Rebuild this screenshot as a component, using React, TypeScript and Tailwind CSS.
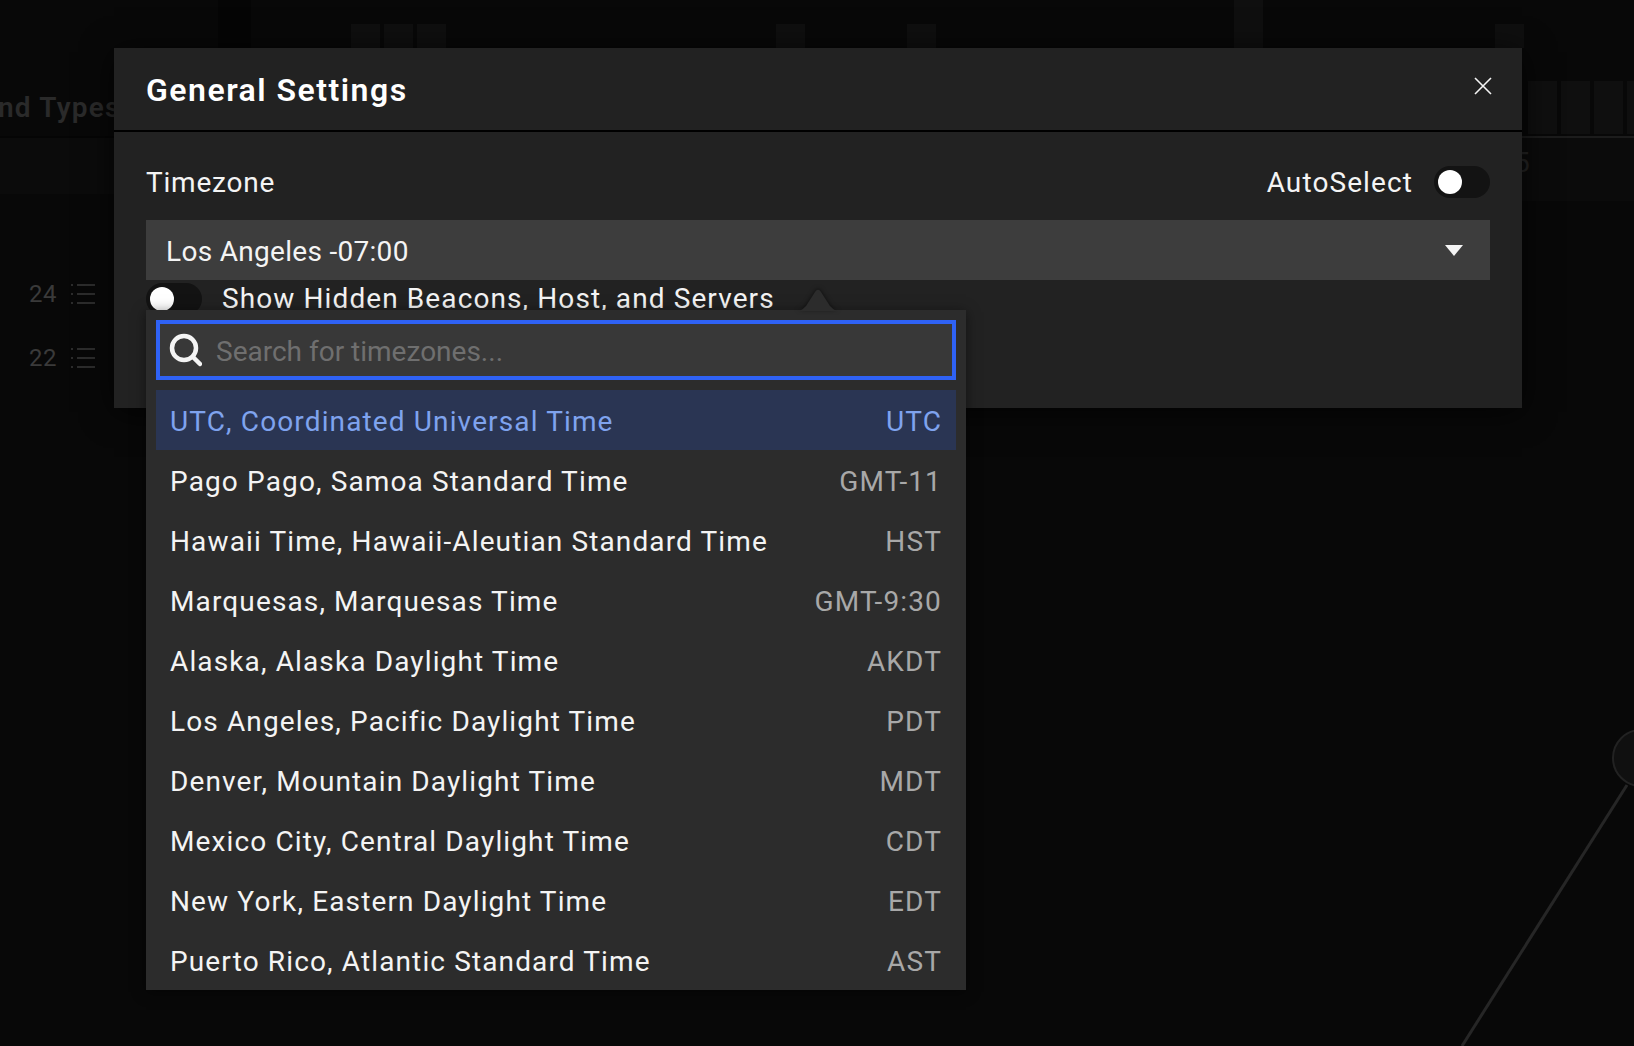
import React from 'react';

// Timezone list shown in the open dropdown
const timezones = [
  { name: 'UTC, Coordinated Universal Time', code: 'UTC' },
  { name: 'Pago Pago, Samoa Standard Time', code: 'GMT-11' },
  { name: 'Hawaii Time, Hawaii-Aleutian Standard Time', code: 'HST' },
  { name: 'Marquesas, Marquesas Time', code: 'GMT-9:30' },
  { name: 'Alaska, Alaska Daylight Time', code: 'AKDT' },
  { name: 'Los Angeles, Pacific Daylight Time', code: 'PDT' },
  { name: 'Denver, Mountain Daylight Time', code: 'MDT' },
  { name: 'Mexico City, Central Daylight Time', code: 'CDT' },
  { name: 'New York, Eastern Daylight Time', code: 'EDT' },
  { name: 'Puerto Rico, Atlantic Standard Time', code: 'AST' },
];

function Toggle() {
  return (
    <div className="flex h-8 w-14 shrink-0 items-center rounded-full bg-[#131313] pl-[4px]">
      <div className="h-6 w-6 rounded-full bg-white" />
    </div>
  );
}

function ListIcon() {
  return (
    <svg width="24" height="22" viewBox="0 0 24 22" fill="none" stroke="#2c2c2c" strokeWidth="2">
      <path d="M0 2h2M6 2h18M0 11h2M6 11h18M0 20h2M6 20h18" />
    </svg>
  );
}

export default function App() {
  return (
    <div className="relative h-[1046px] w-[1634px] overflow-hidden bg-[#080808] font-['Roboto',sans-serif] text-[#f4f4f4]">
      {/* Dimmed page behind the modal */}
      <div className="absolute left-[218px] top-0 h-[48px] w-[33px] bg-[#050505]" />
      <div className="absolute left-[351px] top-[24px] flex gap-[4px]">
        <div className="h-[24px] w-[29px] bg-[#0f0f0f]" />
        <div className="h-[24px] w-[29px] bg-[#0f0f0f]" />
        <div className="h-[24px] w-[29px] bg-[#0f0f0f]" />
      </div>
      <div className="absolute left-[776px] top-[24px] h-[24px] w-[29px] bg-[#0f0f0f]" />
      <div className="absolute left-[907px] top-[24px] h-[24px] w-[29px] bg-[#0f0f0f]" />
      <div className="absolute left-[1234px] top-0 h-[48px] w-[29px] bg-[#0f0f0f]" />
      <div className="absolute left-[1495px] top-[24px] h-[24px] w-[29px] bg-[#0f0f0f]" />
      <div className="absolute left-0 top-[136px] h-[58px] w-[114px] border-t-2 border-[#050505] bg-[#0b0b0b]" />
      <div className="absolute left-[1522px] top-[136px] h-[65px] w-[112px] border-t-2 border-[#1c1c1c] bg-[#0b0b0b]" />
      <div className="absolute left-[1528px] top-[81px] flex gap-[4px]">
        <div className="h-[53px] w-[29px] bg-[#0f0f0f]" />
        <div className="h-[53px] w-[29px] bg-[#0f0f0f]" />
        <div className="h-[53px] w-[29px] bg-[#0f0f0f]" />
        <div className="h-[53px] w-[29px] bg-[#0f0f0f]" />
      </div>
      <div className="absolute left-[-2px] top-[87px] whitespace-nowrap text-[28px] font-semibold tracking-[1.2px] text-[#2a2a2a]">
        nd Types
      </div>
      <div className="absolute left-[1514px] top-[142px] text-[28px] text-[#242424]">5</div>
      <div className="absolute left-[29px] top-[276px] flex items-center gap-[14px] text-[24px] tracking-[0.6px] text-[#3a3a3a]">
        <span>24</span>
        <ListIcon />
      </div>
      <div className="absolute left-[29px] top-[340px] flex items-center gap-[14px] text-[24px] tracking-[0.6px] text-[#3a3a3a]">
        <span>22</span>
        <ListIcon />
      </div>
      <svg className="absolute left-[1400px] top-[730px]" width="234" height="316" fill="none">
        <circle cx="241" cy="28" r="28" fill="#101010" stroke="#222222" strokeWidth="2" />
        <path d="M227 55L62 316" stroke="#262626" strokeWidth="3" />
      </svg>

      {/* General Settings modal */}
      <div className="absolute left-[114px] top-[48px] h-[360px] w-[1408px] bg-[#222222] shadow-[0_4px_30px_rgba(0,0,0,0.7)]">
        <div className="flex h-[84px] items-start justify-between border-b-2 border-black pl-[32px] pr-[30px] pt-[22px]">
          <h2 className="text-[32px] font-semibold leading-[40px] tracking-[1.5px] text-white">General Settings</h2>
          <svg className="mt-[7px]" width="18" height="18" viewBox="0 0 18 18" stroke="#f4f4f4" strokeWidth="1.6">
            <path d="M1 1l16 16M17 1L1 17" />
          </svg>
        </div>
        <div className="px-[32px] pt-[34px]">
          <div className="flex h-8 items-center justify-between">
            <span className="mt-[2px] text-[28px] leading-8 tracking-[0.8px]">Timezone</span>
            <div className="flex items-center gap-[21px]">
              <span className="mt-[2px] text-[28px] leading-8 tracking-[1.1px]">AutoSelect</span>
              <Toggle />
            </div>
          </div>
          <div className="mt-[22px] flex h-[60px] items-center justify-between bg-[#3d3d3d] pl-[20px] pr-[27px]">
            <span className="mt-[4px] text-[28px] tracking-[0.3px]">Los Angeles -07:00</span>
            <svg width="18" height="11" viewBox="0 0 18 11" fill="#f4f4f4">
              <path d="M0 0h18L9 11z" />
            </svg>
          </div>
          <div className="mt-[3px] flex items-center gap-[20px]">
            <Toggle />
            <span className="text-[28px] leading-8 tracking-[1.1px]">Show Hidden Beacons, Host, and Servers</span>
          </div>
        </div>
      </div>

      {/* Open timezone dropdown */}
      <div className="absolute left-[146px] top-[310px] w-[820px] bg-[#2c2c2c] px-[10px] pt-[10px] shadow-[0_2px_12px_rgba(0,0,0,0.5)]">
        <svg
          className="absolute left-[649px] top-[-21px] drop-shadow-[0_-1px_2px_rgba(0,0,0,0.5)]"
          width="46"
          height="22"
          viewBox="0 0 46 22"
          fill="#2c2c2c"
        >
          <path d="M0 22C6 22 8 20 11 17L20 3C22 0 24 0 26 3L35 17C38 20 40 22 46 22z" />
        </svg>
        <div className="flex h-[60px] items-center border-4 border-[#2f62f5] bg-[#383838] pl-[8px]">
          <svg width="34" height="34" viewBox="0 0 34 34" fill="none" stroke="#f4f4f4" strokeWidth="4.5" strokeLinecap="round">
            <circle cx="16" cy="15" r="12" />
            <path d="M25 24l7 7" />
          </svg>
          <span className="ml-[14px] mt-[4px] text-[28px] text-[#6f6f6f]">Search for timezones...</span>
        </div>
        <div className="mt-[10px]">
          {timezones.map((tz, i) => (
            <div
              key={tz.code}
              className={`flex h-[60px] items-center justify-between pl-[14px] pr-[14px] pt-[4px] text-[28px] tracking-[1.13px] ${
                i === 0 ? 'bg-[#2a3553] text-[#7fa3ee]' : ''
              }`}
            >
              <span>{tz.name}</span>
              <span className={i === 0 ? '' : 'text-[#a8a8a8]'}>{tz.code}</span>
            </div>
          ))}
        </div>
      </div>
    </div>
  );
}
